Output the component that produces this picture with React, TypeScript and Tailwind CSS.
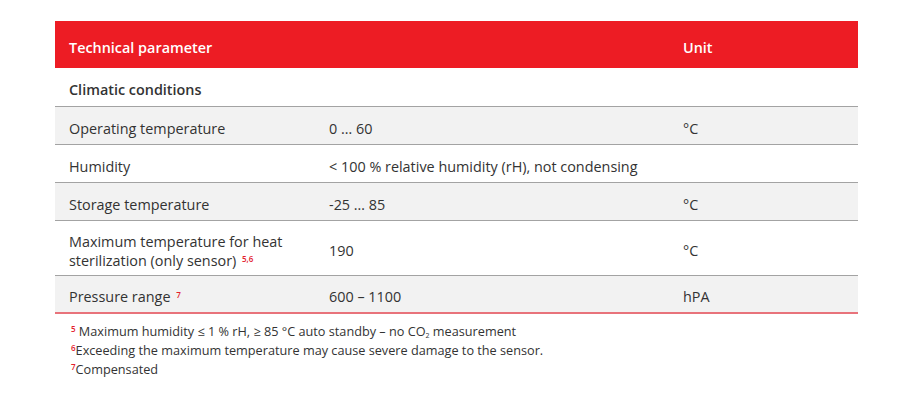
import React from 'react';

type Row = { param: React.ReactNode; value?: string; unit?: string };

const Sup = ({ children }: { children: React.ReactNode }) => (
    <sup className="text-[8px] font-semibold text-[#e3202b] ml-[2px]">{children}</sup>
);

const ROWS: Row[] = [
    { param: 'Operating temperature', value: '0 … 60', unit: '°C' },
    { param: 'Humidity', value: '< 100 % relative humidity (rH), not condensing' },
    { param: 'Storage temperature', value: '-25 … 85', unit: '°C' },
    {
        param: (
            <>
                Maximum temperature for heat
                <br />
                sterilization (only sensor) <Sup>5,6</Sup>
            </>
        ),
        value: '190',
        unit: '°C',
    },
    { param: <>Pressure range <Sup>7</Sup></>, value: '600 – 1100', unit: 'hPA' },
];

const App = () => {
    return (
        <div className="w-[900px] h-[405px] bg-white pt-[21px] px-[55px] text-[#333] font-['Open_Sans',sans-serif]">
            <div className="w-[803px]">
                <div className="flex h-[47px] items-center pt-[6px] bg-[#ed1c24] text-white text-[14.4px] font-semibold">
                    <div className="w-[614px] pl-[14px]">Technical parameter</div>
                    <div className="pl-[14px]">Unit</div>
                </div>
                <div className="flex h-[39px] items-center pt-[6px] border-b border-[#a3a3a3] text-[14.4px] font-semibold pl-[14px]">
                    Climatic conditions
                </div>
                {ROWS.map((r, i) => (
                    <div
                        key={i}
                        className={`flex items-center pt-[5px] text-[14.4px] leading-[19px] ${i === 3 ? 'h-[55px]' : 'h-[38px]'} ${i % 2 === 0 ? 'bg-[#f2f2f2]' : 'bg-white'} ${i === ROWS.length - 1 ? 'border-b-2 border-[#e8737b]' : 'border-b border-[#a3a3a3]'}`}
                    >
                        <div className="w-[260px] pl-[14px]">{r.param}</div>
                        <div className="w-[354px] pl-[14px]">{r.value}</div>
                        <div className="pl-[14px]">{r.unit}</div>
                    </div>
                ))}
                <div className="pt-[8px] pl-[14px] text-[12.7px] leading-[19px]">
                    <p><Sup>5</Sup> Maximum humidity ≤ 1 % rH, ≥ 85 °C auto standby – no CO<sub className="text-[7px]">2</sub> measurement</p>
                    <p><Sup>6</Sup>Exceeding the maximum temperature may cause severe damage to the sensor.</p>
                    <p><Sup>7</Sup>Compensated</p>
                </div>
            </div>
        </div>
    );
};

export default App;
